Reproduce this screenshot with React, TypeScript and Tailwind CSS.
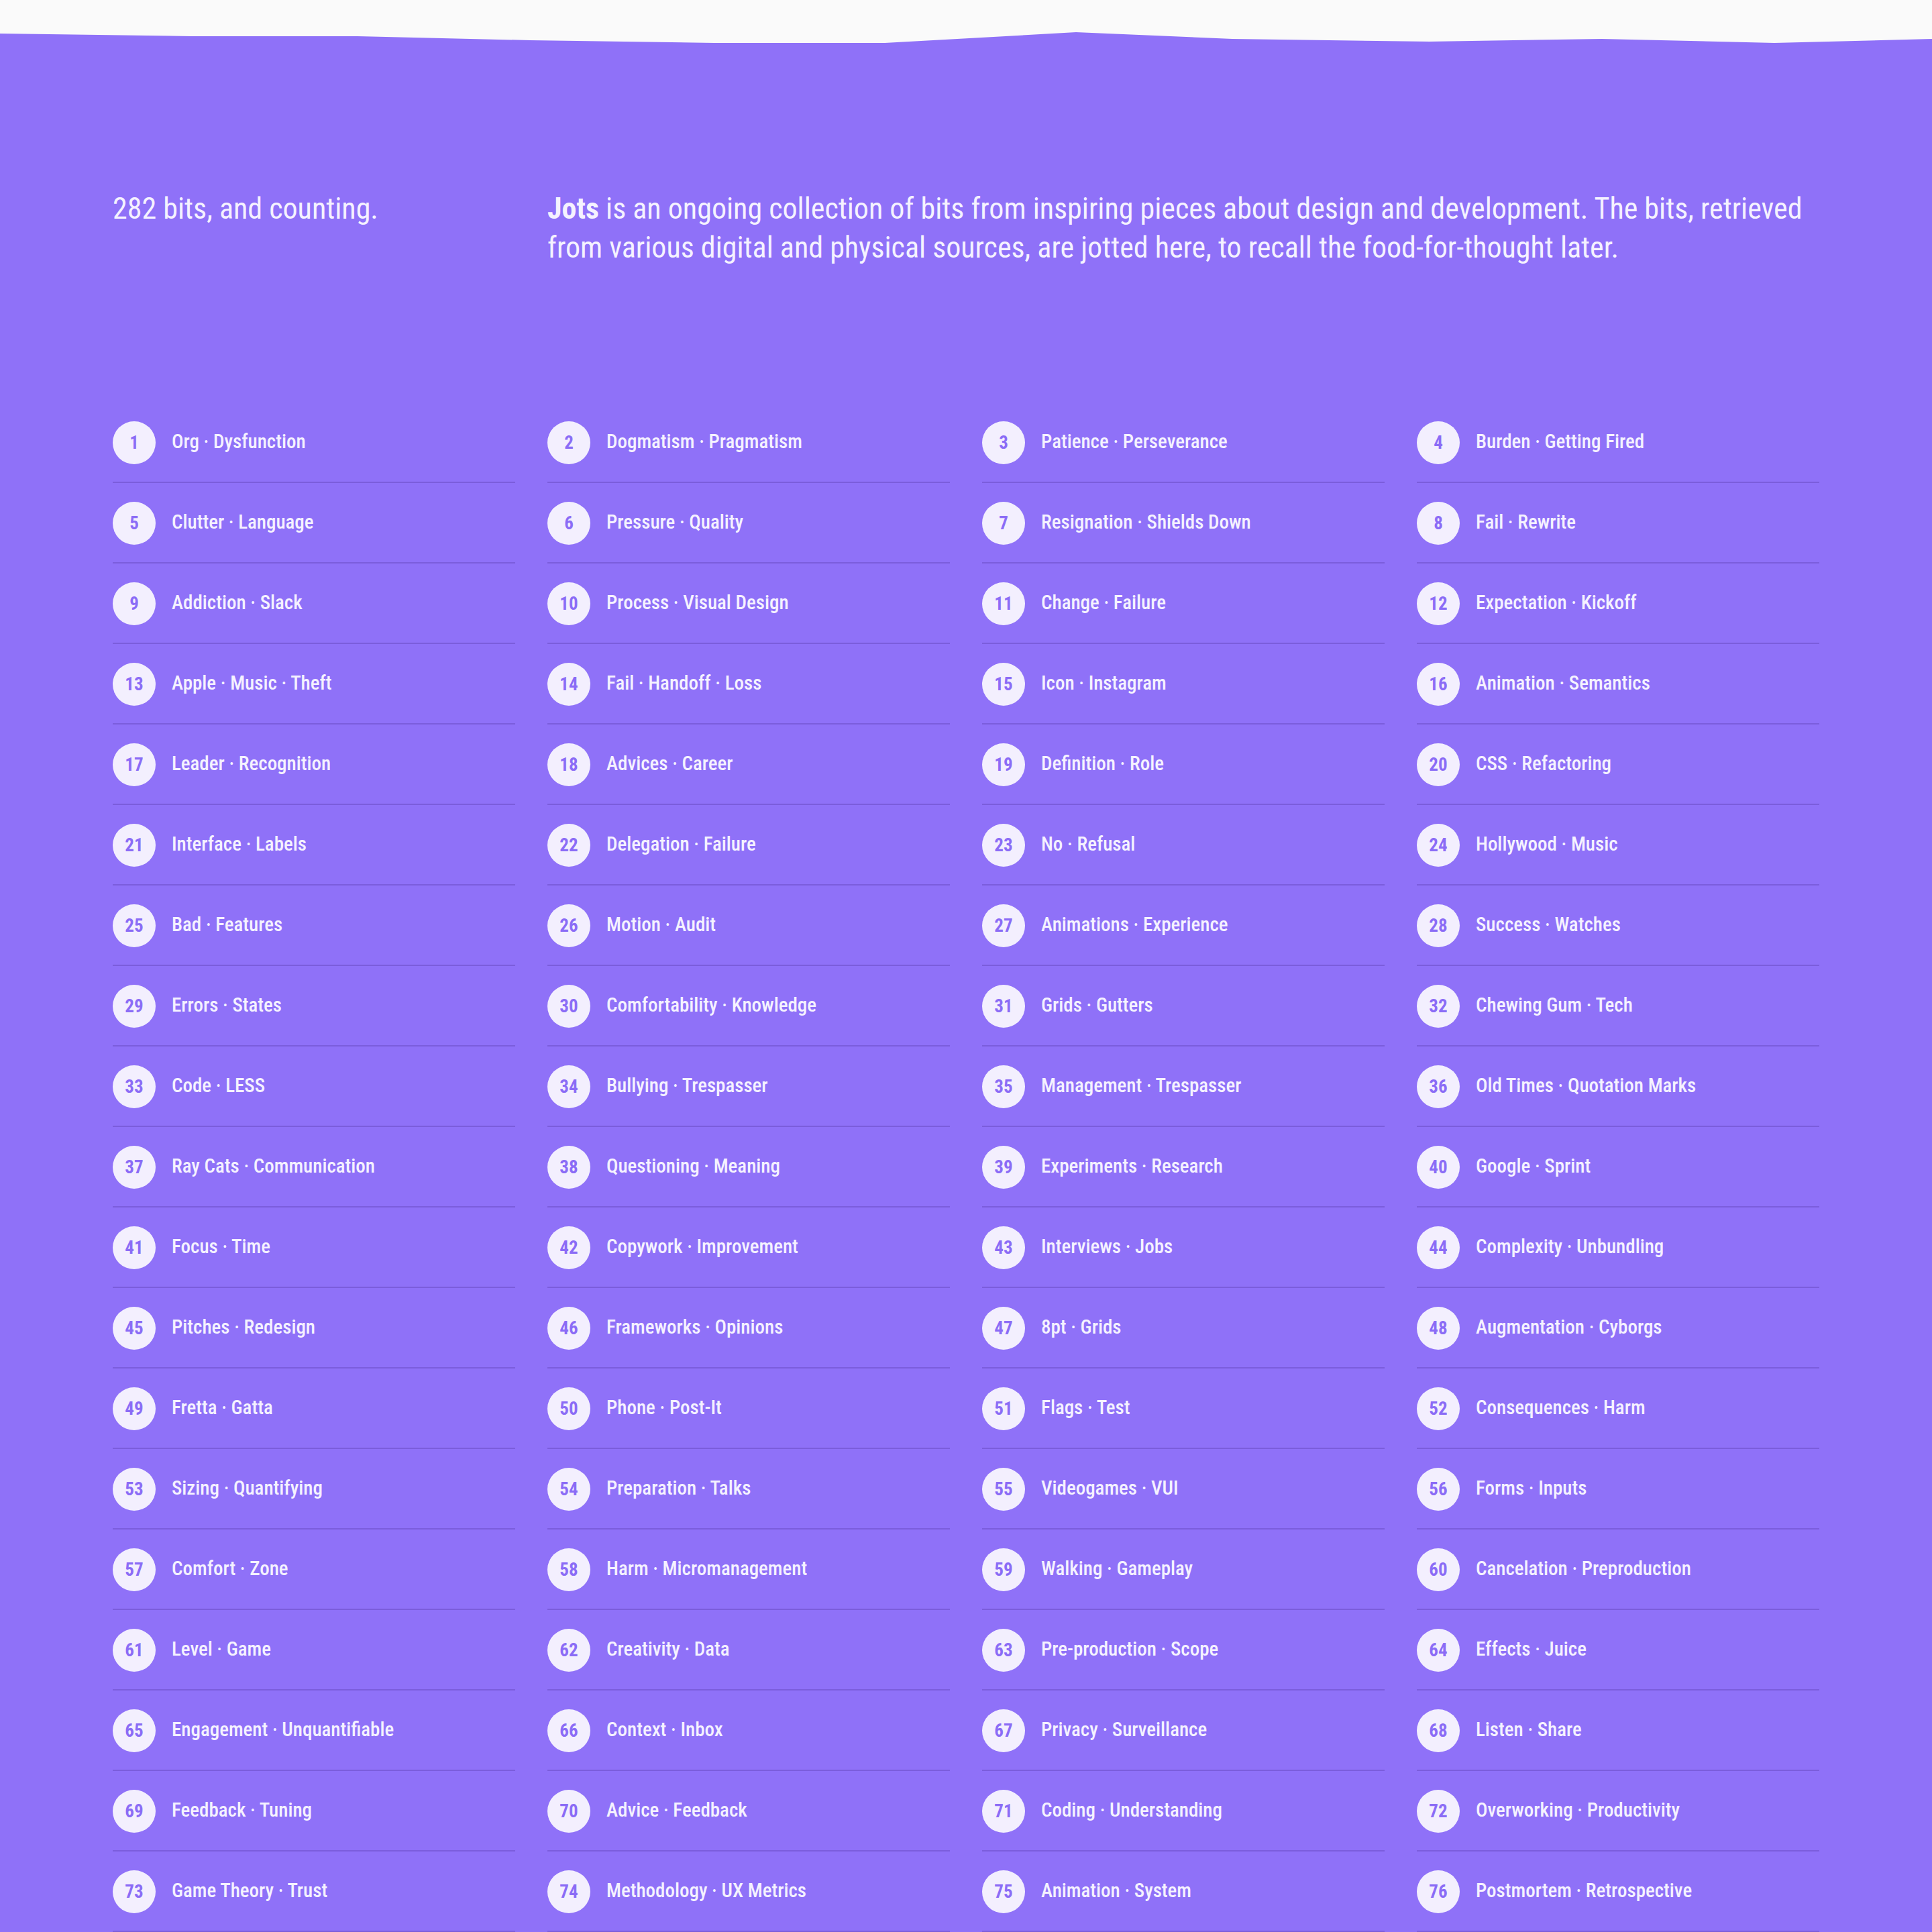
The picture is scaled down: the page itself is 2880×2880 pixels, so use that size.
const jots: string[] = [
  "Org · Dysfunction",
  "Dogmatism · Pragmatism",
  "Patience · Perseverance",
  "Burden · Getting Fired",
  "Clutter · Language",
  "Pressure · Quality",
  "Resignation · Shields Down",
  "Fail · Rewrite",
  "Addiction · Slack",
  "Process · Visual Design",
  "Change · Failure",
  "Expectation · Kickoff",
  "Apple · Music · Theft",
  "Fail · Handoff · Loss",
  "Icon · Instagram",
  "Animation · Semantics",
  "Leader · Recognition",
  "Advices · Career",
  "Definition · Role",
  "CSS · Refactoring",
  "Interface · Labels",
  "Delegation · Failure",
  "No · Refusal",
  "Hollywood · Music",
  "Bad · Features",
  "Motion · Audit",
  "Animations · Experience",
  "Success · Watches",
  "Errors · States",
  "Comfortability · Knowledge",
  "Grids · Gutters",
  "Chewing Gum · Tech",
  "Code · LESS",
  "Bullying · Trespasser",
  "Management · Trespasser",
  "Old Times · Quotation Marks",
  "Ray Cats · Communication",
  "Questioning · Meaning",
  "Experiments · Research",
  "Google · Sprint",
  "Focus · Time",
  "Copywork · Improvement",
  "Interviews · Jobs",
  "Complexity · Unbundling",
  "Pitches · Redesign",
  "Frameworks · Opinions",
  "8pt · Grids",
  "Augmentation · Cyborgs",
  "Fretta · Gatta",
  "Phone · Post-It",
  "Flags · Test",
  "Consequences · Harm",
  "Sizing · Quantifying",
  "Preparation · Talks",
  "Videogames · VUI",
  "Forms · Inputs",
  "Comfort · Zone",
  "Harm · Micromanagement",
  "Walking · Gameplay",
  "Cancelation · Preproduction",
  "Level · Game",
  "Creativity · Data",
  "Pre-production · Scope",
  "Effects · Juice",
  "Engagement · Unquantifiable",
  "Context · Inbox",
  "Privacy · Surveillance",
  "Listen · Share",
  "Feedback · Tuning",
  "Advice · Feedback",
  "Coding · Understanding",
  "Overworking · Productivity",
  "Game Theory · Trust",
  "Methodology · UX Metrics",
  "Animation · System",
  "Postmortem · Retrospective",
];

const JotItem: React.FC<{ n: number; title: string }> = ({ n, title }) => {
  return (
    <li className="flex items-center gap-6 pt-7 pb-[26px] border-b-2 border-[#7b5ddc]">
      <span className="flex items-center justify-center w-16 h-16 shrink-0 rounded-full bg-[#f3effe] text-[#8b6cf6] text-[27px] font-bold">
        {n}
      </span>
      <span className="text-[29px] font-medium text-[#f5f2ff] leading-none -translate-y-[2px]">
        {title}
      </span>
    </li>
  );
};

const App: React.FC = () => {
  return (
    <div className="min-h-screen bg-[#fafafa] font-stretch-condensed font-['Roboto_Condensed','DejaVu_Sans_Condensed',Roboto,sans-serif]">
      <svg
        className="block w-full h-16"
        viewBox="0 0 2880 64"
        preserveAspectRatio="none"
      >
        <polygon
          fill="#8f71f8"
          points="0,50 285,54 533,54 790,60 1065,64 1319,64 1604,48 1837,58 2131,62 2388,58 2645,64 2880,58 2880,64 0,64"
        />
      </svg>
      <main className="bg-[#8f71f8] px-[168px] pt-[218px] pb-40">
        <header className="grid grid-cols-4 gap-x-12">
          <h1 className="text-[44px] font-normal leading-[58px] text-[#f5f2ff]">
            282 bits, and counting.
          </h1>
          <p className="col-span-3 text-[44px] leading-[58px] text-[#f5f2ff]">
            <strong className="font-bold">Jots</strong> is an ongoing collection
            of bits from inspiring pieces about design and development. The
            bits, retrieved from various digital and physical sources, are
            jotted here, to recall the food-for-thought later.
          </p>
        </header>
        <ul className="grid grid-cols-4 gap-x-12 mt-[202px]">
          {jots.map((title, i) => (
            <JotItem key={i} n={i + 1} title={title} />
          ))}
        </ul>
      </main>
    </div>
  );
};

export default App;
